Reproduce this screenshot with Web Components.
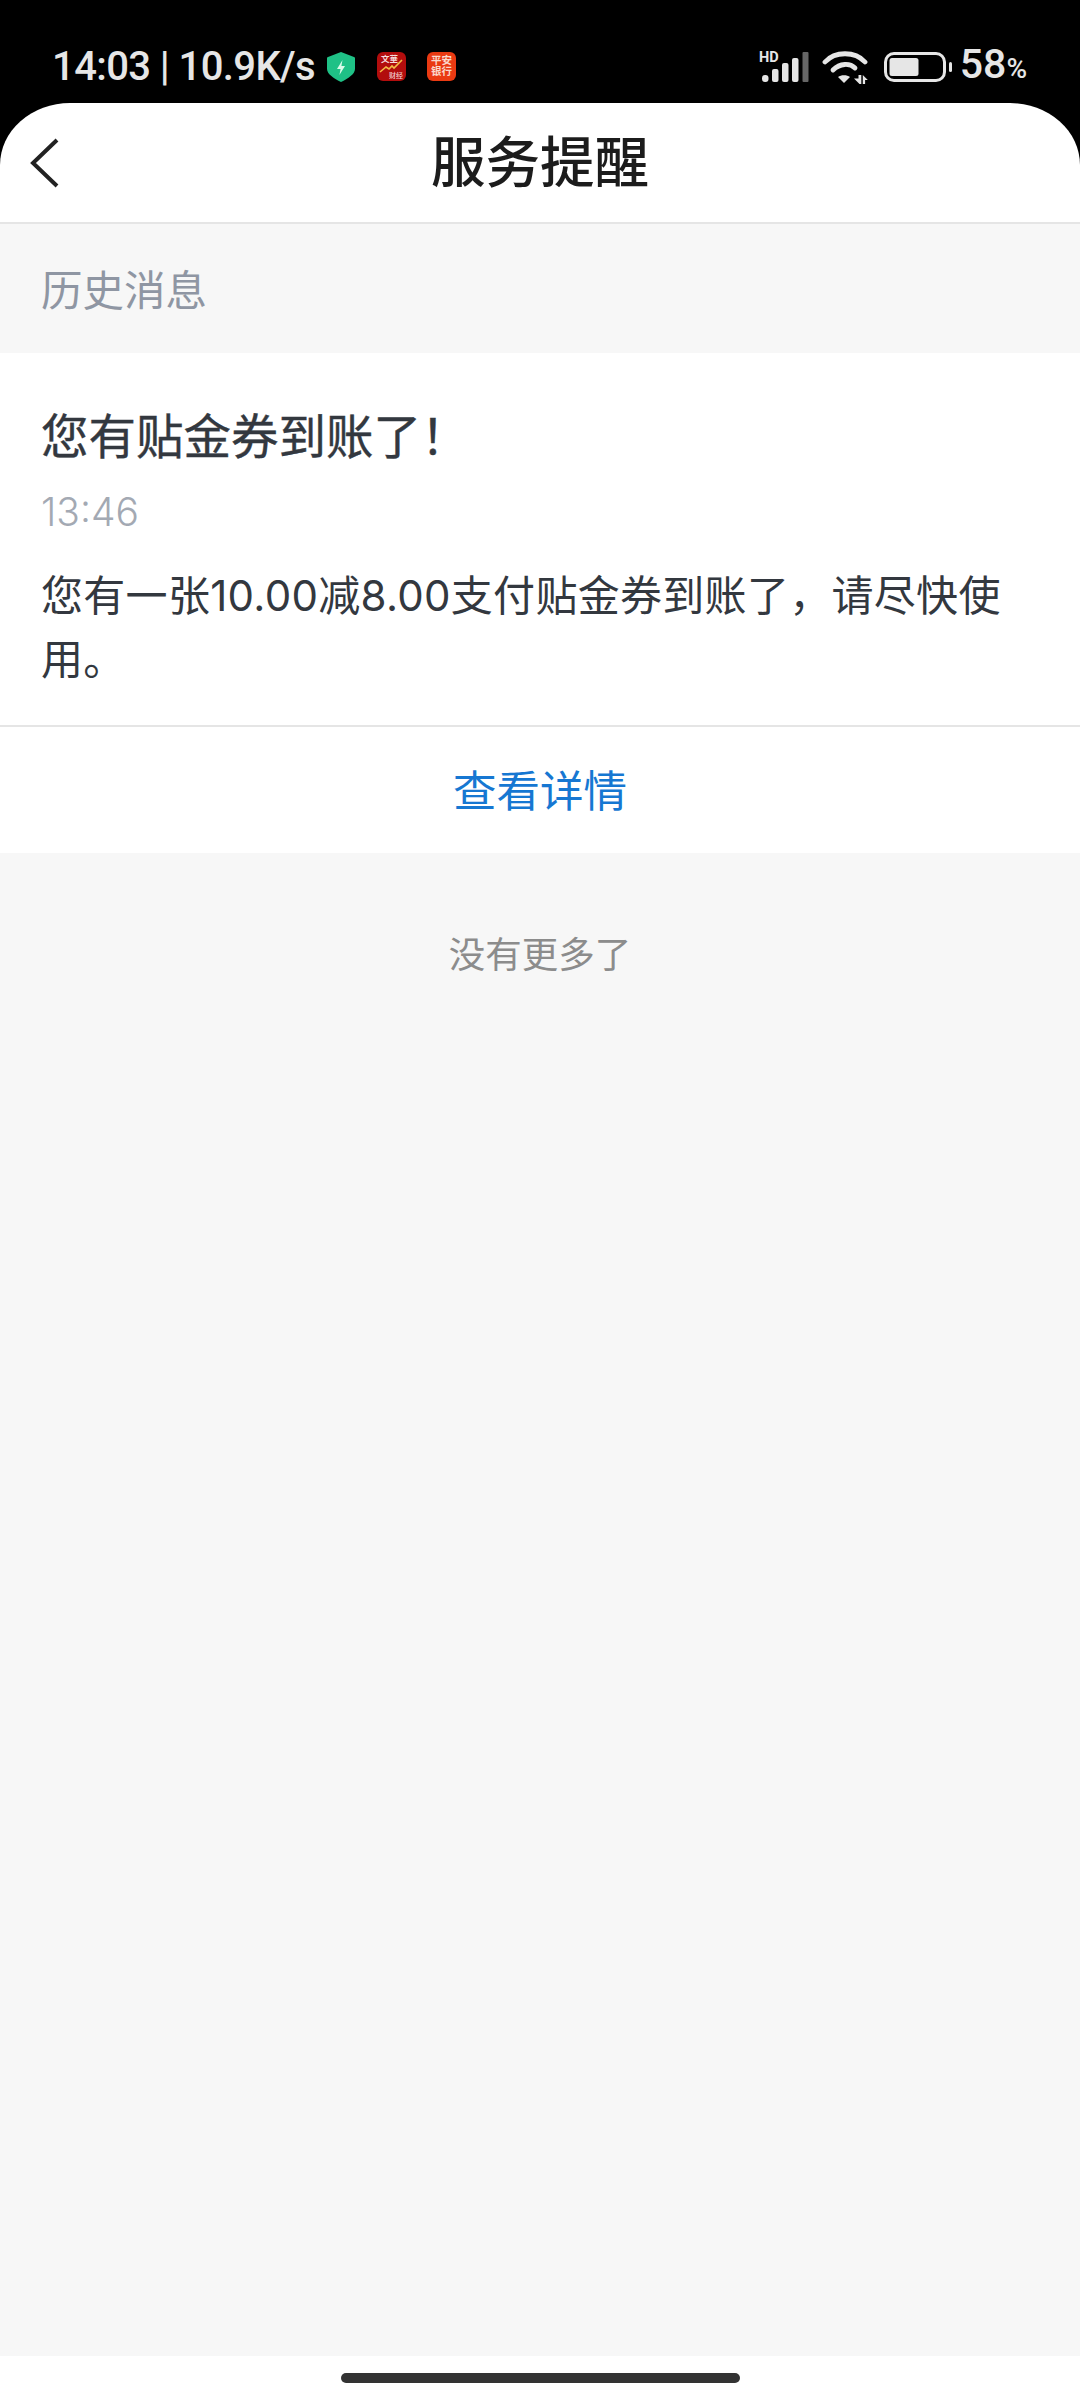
<!DOCTYPE html>
<html lang="zh-CN">
<head>
<meta charset="utf-8">
<title>服务提醒</title>
<style>
  html, body { margin: 0; padding: 0; background: #000; }
  body {
    width: 1080px;
    height: 2400px;
    display: flex;
    flex-direction: column;
    overflow: hidden;
    font-family: "Inter", "Noto Sans CJK SC", sans-serif;
  }
</style>
</head>
<body>
<status-bar></status-bar>
<nav-header>服务提醒</nav-header>
<message-page>
  <section-label slot="label">历史消息</section-label>
  <message-card title-text="您有贴金券到账了！" time="13:46" action="查看详情">您有一张10.00减8.00支付贴金券到账了，请尽快使用。</message-card>
  <end-note>没有更多了</end-note>
</message-page>
<home-bar></home-bar>

<script>
class StatusBar extends HTMLElement {
  constructor() {
    super();
    this.attachShadow({ mode: 'open' });
  }

  connectedCallback() {
    this.shadowRoot.innerHTML = `
      <style>
        :host {
          display: flex;
          align-items: center;
          justify-content: space-between;
          height: 103px;
          box-sizing: border-box;
          padding: 30px 53px 0 52px;
          background: #000;
          color: #e6e6e6;
          font-family: "Roboto", sans-serif;
          font-weight: 500;
        }
        .left, .right { display: flex; align-items: center; }
        .clock { font-size: 40px; line-height: 46px; white-space: nowrap; letter-spacing: -0.6px; }
        .shield { margin-left: 12px; }
        .app { margin-left: 22px; }
        .app + .app { margin-left: 21px; }
        .pct { font-size: 41px; line-height: 46px; margin-left: 8px; }
        .pct small { font-size: 28px; }
        svg { display: block; }
        svg text { font-family: "Noto Sans CJK SC", sans-serif; }
      </style>
      <div class="left">
        <span class="clock">14:03 | 10.9K/s</span>
        <svg class="shield" width="28" height="30" viewBox="0 0 28 30">
          <path d="M14 0 27 5c1 .4 1 1 1 2v10c0 5-7 9.500-14 13C7 26.500 0 22 0 17V7c0-1 0-1.600 1-2z" fill="#1fc186"/>
          <path d="M15.500 8 10 17h3.600l-1.200 6L18 14h-3.600z" fill="#d9fbe9"/>
        </svg>
        <svg class="app" width="29" height="29" viewBox="0 0 29 29">
          <rect width="29" height="29" rx="6" fill="#b20d0d"/>
          <text x="4" y="10" font-size="8.500" font-weight="700" fill="#f6dcdc">文華</text>
          <path d="M3 20l6-5 3 2 3-3 2 2 8-8" fill="none" stroke="#f4bb45" stroke-width="1.600"/>
          <text x="12" y="26" font-size="7" fill="#f1cdcd">财经</text>
        </svg>
        <svg class="app" width="29" height="29" viewBox="0 0 29 29">
          <rect width="29" height="29" rx="6" fill="#ea3a12"/>
          <text x="4" y="12" font-size="10.500" font-weight="700" fill="#fbd9cc">平安</text>
          <text x="4" y="23" font-size="10.500" font-weight="700" fill="#fbd9cc">银行</text>
        </svg>
      </div>
      <div class="right">
        <svg style="margin-top:-4px" width="50" height="36" viewBox="0 -4 50 36">
          <text x="0" y="11" style="font-family:Roboto,sans-serif" font-size="14.500" font-weight="700" fill="#e6e6e6">HD</text>
          <rect x="3" y="24" width="6.500" height="7" rx="3" fill="#e6e6e6"/>
          <rect x="13" y="18" width="6.500" height="13" rx="2" fill="#e6e6e6"/>
          <rect x="23" y="12" width="6.500" height="19" rx="2" fill="#e6e6e6"/>
          <rect x="33" y="7" width="6.500" height="24" rx="2" fill="#e6e6e6"/>
          <rect x="43.500" y="1" width="6" height="30" rx="1" fill="#666"/>
        </svg>
        <svg style="margin-left:13px" width="46" height="34" viewBox="0 0 46 34">
          <g fill="none" stroke="#e6e6e6" stroke-width="4.800" stroke-linecap="round">
            <path d="M3 12C13 1 33 1 43 12"/>
            <path d="M11 20C18 13 28 13 33 18"/>
          </g>
          <path d="M16 27c3-2.500 9-2.500 12 0l-6 6z" fill="#e6e6e6"/>
          <path d="M36.500 25h2.800v9h-1.800l-5.500-5.500h4.500zM40.800 25l5 5h-2.700v4h-2.300z" fill="#e6e6e6"/>
        </svg>
        <svg style="margin-left:16px" width="68" height="30" viewBox="0 0 68 30">
          <rect x="1.500" y="1.500" width="59" height="27" rx="8.500" fill="none" stroke="#e6e6e6" stroke-width="3"/>
          <rect x="5.500" y="6" width="29" height="18" rx="2.500" fill="#e6e6e6"/>
          <rect x="65" y="10" width="3" height="10" rx="1.500" fill="#e6e6e6"/>
        </svg>
        <span class="pct">58<small>%</small></span>
      </div>
    `;
  }
}

class NavHeader extends HTMLElement {
  constructor() {
    super();
    this.attachShadow({ mode: 'open' });
  }

  connectedCallback() {
    this.shadowRoot.innerHTML = `
      <style>
        :host {
          display: block;
          background: #000;
        }
        .bar {
          display: flex;
          align-items: center;
          justify-content: center;
          position: relative;
          height: 121px;
          box-sizing: border-box;
          padding-bottom: 8px;
          background: #fff;
          border-radius: 70px 70px 0 0 / 62px 62px 0 0;
          border-bottom: 2px solid #e5e5e5;
          color: #1c1c1c;
          font-family: "Noto Sans CJK SC", sans-serif;
          font-size: 54.500px;
          font-weight: 500;
        }
        svg { position: absolute; left: 26px; top: 34px; }
      </style>
      <div class="bar">
        <svg width="34" height="52" viewBox="0 0 34 52">
          <path d="M31 3 7 26l24 23" fill="none" stroke="#222" stroke-width="4"/>
        </svg>
        <slot></slot>
      </div>
    `;
  }
}

class MessagePage extends HTMLElement {
  constructor() {
    super();
    this.attachShadow({ mode: 'open' });
  }

  connectedCallback() {
    this.shadowRoot.innerHTML = `
      <style>
        :host {
          display: flex;
          flex-direction: column;
          flex: 1;
          background: #f7f7f7;
        }
      </style>
      <slot name="label"></slot>
      <slot></slot>
    `;
  }
}

class SectionLabel extends HTMLElement {
  constructor() {
    super();
    this.attachShadow({ mode: 'open' });
  }

  connectedCallback() {
    this.shadowRoot.innerHTML = `
      <style>
        :host {
          display: flex;
          align-items: center;
          height: 129px;
          box-sizing: border-box;
          padding: 0 41px 2px;
          color: #8f96a3;
          font-family: "Noto Sans CJK SC", sans-serif;
          font-size: 41.500px;
        }
      </style>
      <slot></slot>
    `;
  }
}

class MessageCard extends HTMLElement {
  constructor() {
    super();
    this.attachShadow({ mode: 'open' });
  }

  connectedCallback() {
    this.shadowRoot.innerHTML = `
      <style>
        :host {
          display: block;
          background: #fff;
          font-family: "Inter", "Noto Sans CJK SC", sans-serif;
        }
        .content { padding: 49px 41px 33px; }
        .title { font-size: 47.500px; line-height: 70px; color: #33383f; -webkit-text-stroke: 0.4px #33383f; }
        .time { font-size: 39px; line-height: 50px; margin-top: 15px; color: #a3a9b3; font-weight: 300; }
        .body { font-size: 42px; line-height: 64px; margin-top: 27px; color: #33383f; letter-spacing: 0.3px; }
        .action {
          display: flex;
          align-items: center;
          justify-content: center;
          height: 128px;
          box-sizing: border-box;
          padding-bottom: 4px;
          border-top: 2px solid #e5e5e5;
          color: #1677d2;
          font-size: 43.500px;
        }
      </style>
      <div class="content">
        <div class="title">${this.getAttribute('title-text')}</div>
        <div class="time">${this.getAttribute('time')}</div>
        <div class="body"><slot></slot></div>
      </div>
      <div class="action">${this.getAttribute('action')}</div>
    `;
  }
}

class EndNote extends HTMLElement {
  constructor() {
    super();
    this.attachShadow({ mode: 'open' });
  }

  connectedCallback() {
    this.shadowRoot.innerHTML = `
      <style>
        :host {
          display: block;
          padding-top: 74px;
          text-align: center;
          color: #8c8c8c;
          font-family: "Noto Sans CJK SC", sans-serif;
          font-size: 36.500px;
          line-height: 52px;
        }
      </style>
      <slot></slot>
    `;
  }
}

class HomeBar extends HTMLElement {
  constructor() {
    super();
    this.attachShadow({ mode: 'open' });
  }

  connectedCallback() {
    this.shadowRoot.innerHTML = `
      <style>
        :host {
          display: flex;
          justify-content: center;
          height: 44px;
          box-sizing: border-box;
          padding-top: 17px;
          background: #fff;
        }
        div { width: 399px; height: 10px; border-radius: 5px; background: #333; }
      </style>
      <div></div>
    `;
  }
}

customElements.define('status-bar', StatusBar);
customElements.define('nav-header', NavHeader);
customElements.define('message-page', MessagePage);
customElements.define('section-label', SectionLabel);
customElements.define('message-card', MessageCard);
customElements.define('end-note', EndNote);
customElements.define('home-bar', HomeBar);
</script>
</body>
</html>
